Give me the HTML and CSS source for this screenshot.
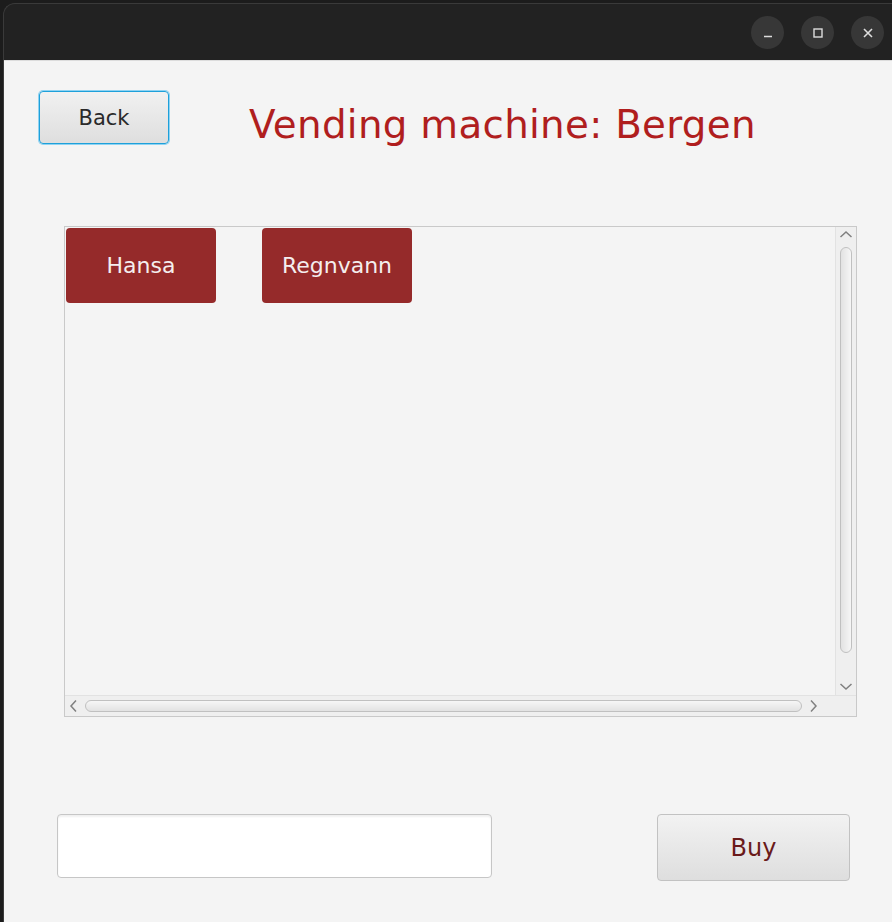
FILE: index.html
```html
<!DOCTYPE html>
<html>
<head>
<meta charset="utf-8">
<link rel="stylesheet" href="styles.css">
</head>
<body>
<div class="window">
  <div class="titlebar">
    <span class="wbtn"><svg width="12" height="12" viewBox="0 0 12 12"><path d="M2 9.5h8" stroke="#ddd" stroke-width="1.5"/></svg></span>
    <span class="wbtn"><svg width="12" height="12" viewBox="0 0 12 12"><rect x="2" y="2" width="8" height="8" fill="none" stroke="#ddd" stroke-width="1.4"/></svg></span>
    <span class="wbtn"><svg width="12" height="12" viewBox="0 0 12 12"><path d="M2 2L10 10M10 2L2 10" stroke="#ddd" stroke-width="1.6"/></svg></span>
  </div>
  <div class="content">
    <div class="header">
      <button class="back">Back</button>
      <h1 class="title">Vending machine: Bergen</h1>
    </div>
    <div class="scrollpane">
      <div class="viewport">
        <div class="items">
          <button class="item">Hansa</button>
          <button class="item">Regnvann</button>
        </div>
        <div class="vbar">
          <svg class="arrow" width="14" height="9" viewBox="0 0 14 9"><path d="M1.5 7L7 2L12.5 7" fill="none" stroke="#808080" stroke-width="1.5"/></svg>
          <div class="vthumb"></div>
          <div class="vspace"></div>
          <svg class="arrow" width="14" height="9" viewBox="0 0 14 9"><path d="M1.5 2L7 7L12.5 2" fill="none" stroke="#808080" stroke-width="1.5"/></svg>
        </div>
      </div>
      <div class="hbar">
        <svg class="arrow" width="9" height="14" viewBox="0 0 9 14"><path d="M7 1.5L2 7L7 12.5" fill="none" stroke="#808080" stroke-width="1.5"/></svg>
        <div class="hthumb"></div>
        <svg class="arrow" width="9" height="14" viewBox="0 0 9 14"><path d="M2 1.5L7 7L2 12.5" fill="none" stroke="#808080" stroke-width="1.5"/></svg>
        <div class="corner"></div>
      </div>
    </div>
    <div class="footer">
      <input class="field" type="text">
      <button class="buy">Buy</button>
    </div>
  </div>
</div>
</body>
</html>
```
FILE: styles.css
```css
html, body {
  margin: 0;
  padding: 0;
  background: #1c1c1c;
  height: 922px;
  overflow: hidden;
}
.window {
  margin: 3px 0 0 3px;
  border-top: 1px solid #3a3a3a;
  border-left: 1px solid #3a3a3a;
  border-radius: 12px 0 0 0;
  background: #222222;
  height: 918px;
  width: 900px;
  overflow: hidden;
  display: flex;
  flex-direction: column;
  font-family: "DejaVu Sans", "Noto Sans", sans-serif;
}
.titlebar {
  height: 56px;
  display: flex;
  align-items: center;
  justify-content: flex-end;
  gap: 17px;
  padding-right: 20px;
  padding-top: 1px;
  box-sizing: border-box;
  flex: none;
}
.wbtn {
  width: 33px;
  height: 33px;
  border-radius: 50%;
  background: #373737;
  display: flex;
  align-items: center;
  justify-content: center;
}
.content {
  background: #f4f4f4;
  flex: 1;
  width: 888px;
  border-top: 1px solid #dcdcdc;
  box-sizing: border-box;
  display: flex;
  flex-direction: column;
}
.header {
  display: flex;
  align-items: flex-start;
  padding: 30px 0 0 35px;
  height: 165px;
  box-sizing: border-box;
}
.back {
  width: 130px;
  height: 53px;
  border: 1px solid #1ea0da;
  border-radius: 4px;
  box-shadow: 0 0 0 1px #8fd3f2;
  background: linear-gradient(#f1f1f1, #dedede);
  font-family: "DejaVu Sans", sans-serif;
  font-size: 21px;
  color: #2a2a2a;
  padding: 0;
}
.title {
  margin: 11px 0 0 80px;
  font-weight: normal;
  font-size: 38.8px;
  color: #b01e1e;
  font-family: "DejaVu Sans", sans-serif;
  letter-spacing: 0.3px;
}
.scrollpane {
  margin-left: 60px;
  width: 793px;
  height: 491px;
  border: 1px solid #c9c9c9;
  box-sizing: border-box;
  display: flex;
  flex-direction: column;
}
.viewport {
  flex: 1;
  display: flex;
}
.items {
  flex: 1;
  display: flex;
  align-items: flex-start;
  gap: 46px;
  padding: 1px 0 0 1px;
}
.item {
  width: 150px;
  height: 75px;
  border: none;
  border-radius: 4px;
  background: #952a2a;
  color: #f4eeee;
  font-family: "DejaVu Sans", sans-serif;
  font-size: 22px;
  padding: 0;
}
.vbar {
  width: 20px;
  border-left: 1px solid #e2e2e2;
  background: #efefef;
  display: flex;
  flex-direction: column;
  align-items: center;
  padding: 3px 0 4px;
  gap: 0;
}
.vthumb {
  margin-top: 8px;
  height: 406px;
  width: 12px;
  border: 1px solid #c0c0c0;
  border-radius: 6px;
  background: linear-gradient(90deg, #e2e2e2, #f6f6f6);
  box-sizing: border-box;
}
.vspace {
  flex: 1;
}
.hbar {
  height: 20px;
  border-top: 1px solid #e2e2e2;
  background: #efefef;
  display: flex;
  align-items: center;
  padding-left: 4px;
  gap: 7px;
}
.hthumb {
  width: 717px;
  height: 12px;
  border: 1px solid #c0c0c0;
  border-radius: 6px;
  background: linear-gradient(#f6f6f6, #e2e2e2);
  box-sizing: border-box;
}
.corner {
  flex: 1;
}
.footer {
  display: flex;
  justify-content: space-between;
  align-items: flex-start;
  padding: 97px 42px 0 53px;
}
.field {
  width: 435px;
  height: 64px;
  border: 1px solid #c6c6c6;
  border-radius: 4px;
  background: #ffffff;
  box-shadow: inset 0 2px 2px #f0f0f0;
  box-sizing: border-box;
  outline: none;
}
.buy {
  width: 193px;
  height: 67px;
  border: 1px solid #c2c2c2;
  border-radius: 4px;
  background: linear-gradient(#f2f2f2, #dedede);
  font-family: "DejaVu Sans", sans-serif;
  font-size: 24px;
  color: #6a1a1a;
  padding: 0;
}
```
